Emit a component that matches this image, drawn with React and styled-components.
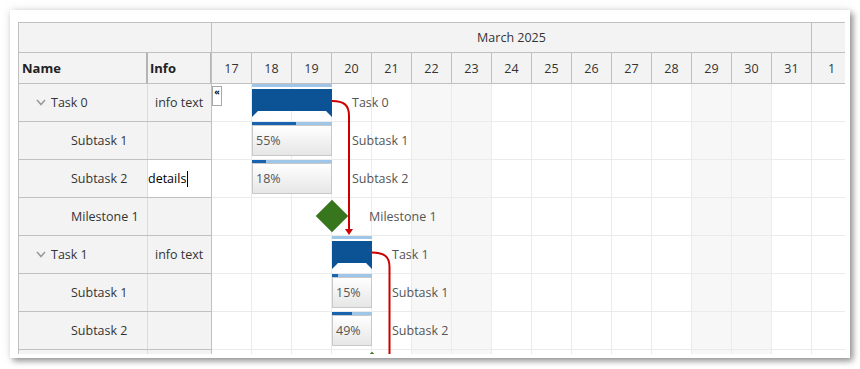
import React from "react";
import styled, { createGlobalStyle } from "styled-components";

const GlobalStyle = createGlobalStyle`
  html, body {
    margin: 0;
    padding: 0;
    background: #fff;
  }
  body {
    font-family: "Open Sans", "Noto Sans", sans-serif;
    font-size: 12.5px;
    color: #333;
  }
`;

const DAY = 40;
const ROW = 38;

const days = [17, 18, 19, 20, 21, 22, 23, 24, 25, 26, 27, 28, 29, 30, 31, 1];
const weekends = [22, 23, 29, 30];

// last row is only partly scrolled into view: its texts fall below the fold
const rows = [
  { name: "Task 0", level: 0, info: "info text", type: "group", start: 1, len: 2 },
  { name: "Subtask 1", level: 1, type: "task", start: 1, len: 2, complete: 55 },
  { name: "Subtask 2", level: 1, type: "task", start: 1, len: 2, complete: 18, editing: "details" },
  { name: "Milestone 1", level: 1, type: "milestone", start: 3 },
  { name: "Task 1", level: 0, info: "info text", type: "group", start: 3, len: 1 },
  { name: "Subtask 1", level: 1, type: "task", start: 3, len: 1, complete: 15 },
  { name: "Subtask 2", level: 1, type: "task", start: 3, len: 1, complete: 49 },
  { name: "", level: 1, type: "milestone", start: 4 },
];

const Page = styled.div`
  width: 860px;
  height: 369px;
  padding: 10px 0 0 10px;
  box-sizing: border-box;
`;

const Card = styled.div`
  width: 840px;
  height: 348px;
  background: #fff;
  box-sizing: border-box;
  padding: 12px 5px 0 8px;
  box-shadow: 3px 3px 6px rgba(0, 0, 0, 0.4), 0 0 10px rgba(0, 0, 0, 0.1);
`;

const Gantt = styled.div`
  display: flex;
  height: 331px;
  border-top: 1px solid #c0c0c0;
  border-left: 1px solid #c0c0c0;
  overflow: hidden;
`;

const LeftPanel = styled.div`
  width: 193px;
  flex: none;
  box-sizing: border-box;
  border-right: 1px solid #c0c0c0;
  background: #f3f3f3;
`;

const HeaderTop = styled.div`
  height: 30px;
  box-sizing: border-box;
  border-bottom: 1px solid #c0c0c0;
  background: #f3f3f3;
`;

const HeaderRow = styled.div`
  display: flex;
  height: 31px;
  box-sizing: border-box;
  border-bottom: 1px solid #c0c0c0;
  background: #f3f3f3;
`;

const ColumnHead = styled.div`
  width: ${(p) => p.$width}px;
  flex: none;
  box-sizing: border-box;
  display: flex;
  align-items: center;
  padding-left: ${(p) => p.$pad}px;
  font-weight: bold;
  font-size: 13px;
  color: #222;
  border-right: ${(p) => p.$thick}px solid #b4b4b4;
`;

const LeftRow = styled.div`
  display: flex;
  height: ${ROW}px;
  box-sizing: border-box;
  border-bottom: 1px solid #c0c0c0;
`;

const NameCell = styled.div`
  width: 129px;
  flex: none;
  box-sizing: border-box;
  border-right: 1px solid #dcdcdc;
  display: flex;
  align-items: center;
  gap: 5px;
  padding-left: ${(p) => (p.$level === 0 ? 17 : 52)}px;
  white-space: nowrap;
`;

const InfoCell = styled.div`
  flex: 1;
  display: flex;
  align-items: center;
  padding-left: ${(p) => (p.$editing ? 0 : 7)}px;
  background: ${(p) => (p.$editing ? "#fff" : "transparent")};
  color: ${(p) => (p.$editing ? "#000" : "#333")};
  white-space: nowrap;
`;

const Caret = styled.span`
  display: inline-block;
  width: 1px;
  height: 16px;
  background: #000;
  margin-left: 1px;
`;

const Timeline = styled.div`
  flex: 1;
  min-width: 0;
  overflow: hidden;
`;

const Strip = styled.div`
  display: flex;
  width: ${days.length * DAY}px;
`;

const MonthRow = styled(Strip)`
  height: 30px;
  box-sizing: border-box;
  border-bottom: 1px solid #c0c0c0;
  background: #f3f3f3;
`;

const MonthCell = styled.div`
  width: ${(p) => p.$span * DAY}px;
  flex: none;
  box-sizing: border-box;
  border-right: 1px solid #c0c0c0;
  display: flex;
  align-items: center;
  justify-content: center;
`;

const DayRow = styled(Strip)`
  height: 31px;
  box-sizing: border-box;
  border-bottom: 1px solid #c0c0c0;
  background: #f3f3f3;
`;

const DayCell = styled.div`
  width: ${DAY}px;
  flex: none;
  box-sizing: border-box;
  border-right: 1px solid #c0c0c0;
  display: flex;
  align-items: center;
  justify-content: center;
`;

const Body = styled.div`
  position: relative;
  width: ${days.length * DAY}px;
`;

const GridRow = styled(Strip)`
  height: ${ROW}px;
  box-sizing: border-box;
  border-bottom: 1px solid #ebebeb;
`;

const GridCell = styled.div`
  width: ${DAY}px;
  flex: none;
  box-sizing: border-box;
  border-right: 1px solid #ebebeb;
  background: ${(p) => (p.$weekend ? "#f7f7f7" : "#fff")};
`;

const CollapseButton = styled.div`
  position: absolute;
  left: 0;
  top: 2px;
  width: 10px;
  height: 20px;
  box-sizing: border-box;
  border: 1px solid #a8a8a8;
  background: #fff;
  font-size: 9px;
  line-height: 9px;
  font-weight: bold;
  color: #000;
  text-align: center;
  z-index: 3;
`;

const BarBox = styled.div`
  position: absolute;
  height: ${ROW - 1}px;
`;

const Progress = styled.div`
  height: 3px;
  background: #9fc5e8;
`;

const ProgressDone = styled.div`
  height: 3px;
  background: #1763b0;
`;

const GroupFill = styled.div`
  margin-top: 2px;
  height: 28px;
  background: #0b5394;
  clip-path: polygon(0 0, 100% 0, 100% 100%, calc(100% - 6px) calc(100% - 6px), 6px calc(100% - 6px), 0 100%);
`;

const TaskFill = styled.div`
  height: 31px;
  box-sizing: border-box;
  border: 1px solid #c8c8c8;
  background: linear-gradient(#ffffff, #e6e6e6);
  color: #555;
  display: flex;
  align-items: center;
  padding-left: 3px;
`;

const Diamond = styled.div`
  position: absolute;
  width: 23px;
  height: 23px;
  background: #38761d;
  transform: translate(-50%, -50%) rotate(45deg);
`;

const BarLabel = styled.div`
  position: absolute;
  height: ${ROW - 1}px;
  display: flex;
  align-items: center;
  color: #555;
  white-space: nowrap;
`;

const Links = styled.svg`
  position: absolute;
  left: 0;
  top: 0;
  overflow: visible;
  pointer-events: none;
  z-index: 2;
`;

function Chevron() {
  return (
    <svg width="10" height="7" viewBox="0 0 10 7">
      <path d="M1 1 L5 5.5 L9 1" fill="none" stroke="#9a9a9a" strokeWidth="1.6" />
    </svg>
  );
}

function Bar({ row, index }) {
  const top = index * ROW;
  if (row.type === "milestone") {
    const cx = row.start * DAY;
    return (
      <>
        <Diamond style={{ left: cx, top: top + 17.5 }} />
        {row.name && <BarLabel style={{ left: cx + 37, top }}>{row.name}</BarLabel>}
      </>
    );
  }
  const left = row.start * DAY;
  const width = row.len * DAY;
  return (
    <>
      <BarBox style={{ left, top, width }}>
        {row.type === "group" ? (
          <>
            <Progress />
            <GroupFill />
          </>
        ) : (
          <>
            <Progress>
              <ProgressDone style={{ width: `${row.complete}%` }} />
            </Progress>
            <TaskFill>{row.complete}%</TaskFill>
          </>
        )}
      </BarBox>
      <BarLabel style={{ left: left + width + 20, top }}>{row.name}</BarLabel>
    </>
  );
}

export default function App() {
  return (
    <>
      <GlobalStyle />
      <Page>
        <Card>
          <Gantt>
            <LeftPanel>
              <HeaderTop />
              <HeaderRow>
                <ColumnHead $width={129} $pad={3} $thick={2}>Name</ColumnHead>
                <ColumnHead $width={63} $pad={2} $thick={1}>Info</ColumnHead>
              </HeaderRow>
              {rows.map((r, i) => (
                <LeftRow key={i}>
                  <NameCell $level={r.level}>
                    {r.level === 0 && <Chevron />}
                    {r.name}
                  </NameCell>
                  <InfoCell $editing={!!r.editing}>
                    {r.editing ? (
                      <>
                        {r.editing}
                        <Caret />
                      </>
                    ) : (
                      r.info
                    )}
                  </InfoCell>
                </LeftRow>
              ))}
            </LeftPanel>
            <Timeline>
              <MonthRow>
                <MonthCell $span={15}>March 2025</MonthCell>
                <MonthCell $span={1} />
              </MonthRow>
              <DayRow>
                {days.map((d) => (
                  <DayCell key={d}>{d}</DayCell>
                ))}
              </DayRow>
              <Body>
                {rows.map((r, i) => (
                  <GridRow key={i}>
                    {days.map((d) => (
                      <GridCell key={d} $weekend={weekends.includes(d)} />
                    ))}
                  </GridRow>
                ))}
                <CollapseButton>«</CollapseButton>
                {rows.map((r, i) => (
                  <Bar key={i} row={r} index={i} />
                ))}
                <Links width={days.length * DAY} height={rows.length * ROW}>
                  <path
                    d="M120 17 C 132 17 137 21 137 32 L 137 146"
                    fill="none"
                    stroke="#cc0000"
                    strokeWidth="2"
                  />
                  <polygon points="133,145 141,145 137,151" fill="#cc0000" />
                  <path
                    d="M160 168.5 C 172 168.5 177.5 172.5 177.5 183 L 177.5 300"
                    fill="none"
                    stroke="#cc0000"
                    strokeWidth="2"
                  />
                </Links>
              </Body>
            </Timeline>
          </Gantt>
        </Card>
      </Page>
    </>
  );
}
